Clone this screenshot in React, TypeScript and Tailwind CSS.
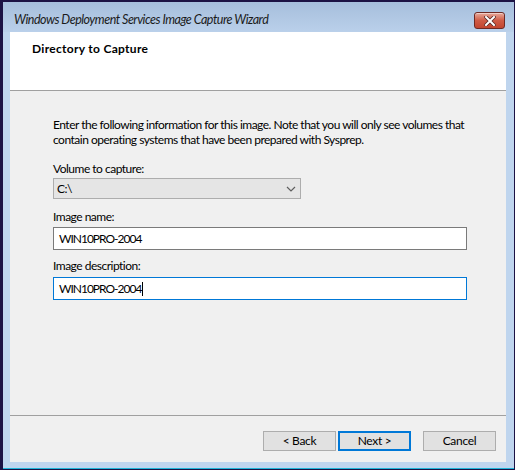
const ui = { fontFamily: 'Lato, "Noto Sans", sans-serif' };

function Chevron() {
  return (
    <svg width="10" height="6" viewBox="0 0 10 6" className="shrink-0">
      <path d="M1 1 L5 5 L9 1" fill="none" stroke="#5f5f5f" strokeWidth="1.2" />
    </svg>
  );
}

function CloseButton() {
  return (
    <div className="mt-[10px] w-[31px] h-[17px] rounded-[3px] border border-[#6e2a24] bg-gradient-to-b from-[#e6a99c] via-[#cf5b45] to-[#c2452f] flex items-center justify-center shadow-[inset_0_1px_0_rgba(255,255,255,0.45)]">
      <svg width="12" height="10" viewBox="0 0 12 10">
        <path d="M2 1 L10 9 M10 1 L2 9" stroke="#5a2a26" strokeWidth="3.6" strokeLinecap="square" />
        <path d="M2 1 L10 9 M10 1 L2 9" stroke="#ffffff" strokeWidth="2" strokeLinecap="square" />
      </svg>
    </div>
  );
}

function Button({ children, focused }: { children: string; focused?: boolean }) {
  return (
    <button
      className={
        focused
          ? 'w-[73px] h-[20px] bg-[#e1e1e1] border-2 border-[#0078d7] text-[12px] leading-[14px] tracking-[-0.3px] text-black'
          : 'w-[73px] h-[20px] bg-[#e1e1e1] border border-[#adadad] text-[12px] leading-[14px] tracking-[-0.3px] text-black'
      }
    >
      {children}
    </button>
  );
}

export default function App() {
  return (
    <div className="w-[515px] h-[470px] bg-[#1c1244] pl-[3px] pt-[2px] pr-[1px] pb-[1px]" style={ui}>
      <div className="h-full flex flex-col bg-[#bfd5ee] border-b border-[#1fb4d8]">
        <div className="h-[30px] shrink-0 flex justify-between pl-[11px] pr-[9px] bg-gradient-to-b from-[#a6bedc] to-[#bad0ea]">
          <span className="italic text-[12.5px] tracking-[-0.5px] leading-[30px] mt-[3px] text-[#1b1b1b]">
            Windows Deployment Services Image Capture Wizard
          </span>
          <CloseButton />
        </div>

        <div className="flex-1 ml-[7px] mr-[8px] mb-[6px] flex flex-col bg-[#f0f0f0]">
          <div className="h-[58px] bg-white pl-[22px] pt-[9px]">
            <div className="text-[12px] leading-[15px] font-bold tracking-[0.3px] text-black">Directory to Capture</div>
          </div>
          <div className="h-px bg-[#a0a0a0]" />

          <div className="flex-1 flex flex-col text-[12px] leading-[15px] tracking-[-0.5px] text-black">
            <div className="pl-[43px] pt-[26px]">
              <p className="whitespace-nowrap">
                Enter the following information for this image. Note that you will only see volumes that
                <br />
                contain operating systems that have been prepared with Sysprep.
              </p>

              <div className="mt-[14px]">Volume to capture:</div>
              <div className="mt-[2px] w-[248px] h-[21px] bg-[#e5e5e5] border border-[#adadad] flex items-center justify-between pl-[3px] pr-[4px]">
                <span>C:\</span>
                <Chevron />
              </div>

              <div className="mt-[10px]">Image name:</div>
              <div className="mt-[3px] w-[414px] h-[23px] bg-white border border-[#7a7a7a] flex items-center pl-[5px] tracking-[-1px]">
                WIN10PRO-2004
              </div>

              <div className="mt-[8px]">Image description:</div>
              <div className="mt-[4px] w-[414px] h-[23px] bg-white border border-[#0078d7] flex items-center pl-[5px] tracking-[-1px]">
                <span>WIN10PRO-2004</span>
                <span className="ml-[1px] w-px h-[14px] bg-black" />
              </div>
            </div>

            <div className="mt-auto h-px bg-[#a0a0a0]" />
            <div className="flex justify-end gap-[2px] pt-[15px] pb-[11px] pr-[10px]">
              <Button>{'< Back'}</Button>
              <Button focused>{'Next >'}</Button>
              <div className="w-[8px]" />
              <Button>Cancel</Button>
            </div>
          </div>
        </div>
      </div>
    </div>
  );
}
